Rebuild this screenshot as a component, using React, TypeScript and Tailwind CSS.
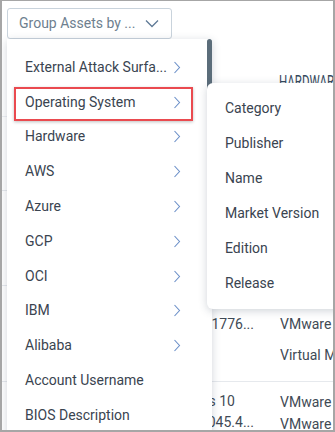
import React from 'react';

const font = { fontFamily: 'Roboto, "Noto Sans", sans-serif' };

const menuItems: { label: string; sub: boolean }[] = [
  { label: 'External Attack Surfa...', sub: true },
  { label: 'Operating System', sub: true },
  { label: 'Hardware', sub: true },
  { label: 'AWS', sub: true },
  { label: 'Azure', sub: true },
  { label: 'GCP', sub: true },
  { label: 'OCI', sub: true },
  { label: 'IBM', sub: true },
  { label: 'Alibaba', sub: true },
  { label: 'Account Username', sub: false },
  { label: 'BIOS Description', sub: false },
];

const subItems = ['Category', 'Publisher', 'Name', 'Market Version', 'Edition', 'Release'];

const Chevron = () => (
  <svg width="8" height="13" viewBox="0 0 8 13" fill="none">
    <path d="M1.5 1 L6.5 6.5 L1.5 12" stroke="#6b8fc8" strokeWidth="1.1" />
  </svg>
);

export default function App() {
  return (
    <div
      className="relative w-[335px] h-[432px] overflow-hidden bg-white border-2 border-t border-[#a6a6a6]"
      style={font}
    >
      {/* toolbar */}
      <div className="pl-[5px] pt-[7px]">
        <button className="flex items-center w-[165px] h-[31px] pl-[11px] pr-[12px] justify-between rounded-[3px] border border-[#c9d3dc] bg-white text-[14px] text-[#6e7f8f]">
          <span>Group Assets by ...</span>
          <svg width="14" height="9" viewBox="0 0 14 9" fill="none">
            <path d="M1 1.5 L7 7.5 L13 1.5" stroke="#5f7a96" strokeWidth="1.3" />
          </svg>
        </button>
      </div>

      {/* table behind */}
      <div className="mt-[8px] text-[14px] text-[#3f4a55]">
        <div className="flex h-[70px] items-center border-b border-[#eef0f3] overflow-hidden">
          <div className="w-[277px] shrink-0" />
          <span className="shrink-0 origin-left [transform:scaleX(0.64)] text-[18px] leading-[20px] text-[#34495c] whitespace-nowrap">
            HARDWARE MODEL
          </span>
        </div>
        <div className="h-[74px] border-b border-[#e6e9ed]" />
        <div className="h-[95px] border-b border-[#e6e9ed]" />
        <div className="flex h-[96px] border-b border-[#e6e9ed] overflow-hidden pt-[28px]">
          <div className="w-[252px] shrink-0 flex justify-end overflow-hidden">
            <span className="whitespace-nowrap">Server 2019 10.0.17763.1776...</span>
          </div>
          <div className="ml-[26px] shrink-0 flex flex-col gap-[10px] whitespace-nowrap">
            <span>VMware</span>
            <span>Virtual Machine</span>
          </div>
        </div>
        <div className="flex pt-[9px] overflow-hidden">
          <div className="w-[252px] shrink-0 flex flex-col items-end leading-[21px] overflow-hidden">
            <span className="pr-[19px] whitespace-nowrap">Windows 10</span>
            <span className="whitespace-nowrap">Pro 22H2 Build 19045.4...</span>
          </div>
          <div className="ml-[26px] shrink-0 flex flex-col leading-[22px] whitespace-nowrap">
            <span>VMware</span>
            <span>VMware</span>
          </div>
        </div>
      </div>

      {/* dropdown menu */}
      <div className="absolute left-[5px] top-[38px] w-[205px] h-[400px] bg-white shadow-[0_2px_8px_rgba(40,60,80,0.22)] rounded-b-[4px]">
        <div className="absolute right-0 top-0 w-[5px] h-[63px] rounded-[3px] bg-[#5b6d7a]" />
        <div className="pt-[11px]">
          {menuItems.map((it) => (
            <div
              key={it.label}
              className="flex h-[34.8px] items-center justify-between pl-[18px] pr-[31px] text-[14px] text-[#3a4450]"
            >
              <span className="whitespace-nowrap">{it.label}</span>
              {it.sub && <Chevron />}
            </div>
          ))}
        </div>
      </div>

      {/* highlight */}
      <div className="absolute left-[12px] top-[86px] w-[179px] h-[34px] border-2 border-[#ea4a4f] shadow-[0_1px_3px_rgba(0,0,0,0.25)]" />

      {/* sub menu */}
      <div className="absolute left-[205px] top-[82px] w-[140px] h-[226px] bg-white rounded-[6px] shadow-[0_2px_8px_rgba(40,60,80,0.22)] py-[8px]">
        {subItems.map((s) => (
          <div key={s} className="flex h-[35px] items-center pl-[18px] text-[14px] text-[#3a4450] whitespace-nowrap">
            {s}
          </div>
        ))}
      </div>
    </div>
  );
}
